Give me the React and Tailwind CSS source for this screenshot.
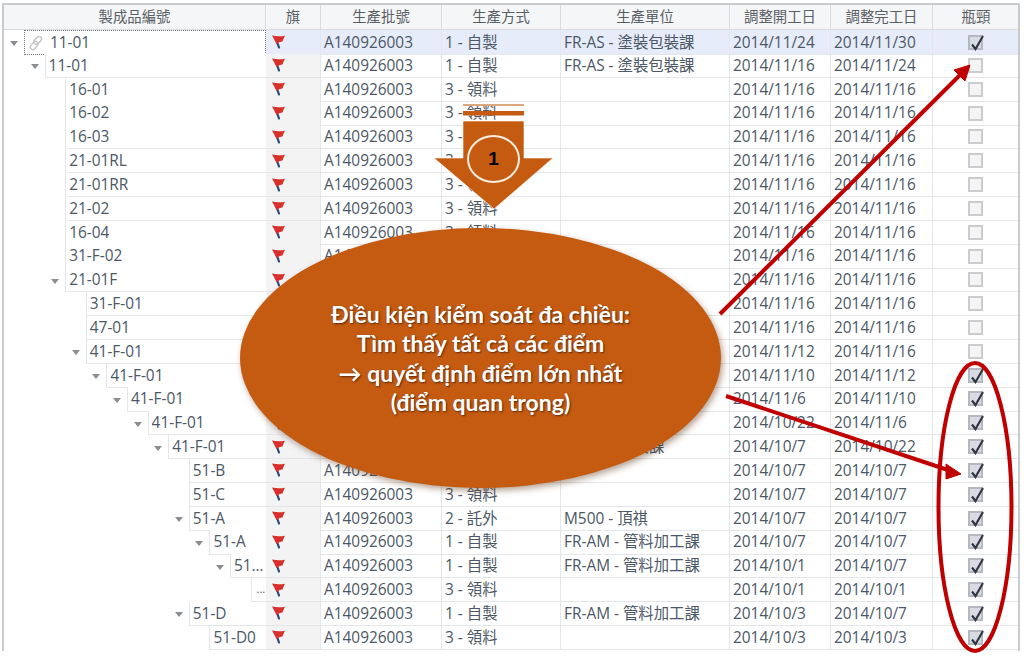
import React from 'react';

const SELF = '1 - 自製';
const PICK = '3 - 領料';
const COAT = 'FR-AS - 塗裝包裝課';
const PIPE = 'FR-AM - 管料加工課';
const WELD = 'FR-AP - 焊接課';

const rows = [
  { name: '11-01', level: 0, open: true, method: SELF, unit: COAT, start: '2014/11/24', end: '2014/11/30', check: true, selected: true },
  { name: '11-01', level: 1, open: true, method: SELF, unit: COAT, start: '2014/11/16', end: '2014/11/24' },
  { name: '16-01', level: 2, method: PICK, unit: '', start: '2014/11/16', end: '2014/11/16' },
  { name: '16-02', level: 2, method: PICK, unit: '', start: '2014/11/16', end: '2014/11/16' },
  { name: '16-03', level: 2, method: PICK, unit: '', start: '2014/11/16', end: '2014/11/16' },
  { name: '21-01RL', level: 2, method: PICK, unit: '', start: '2014/11/16', end: '2014/11/16' },
  { name: '21-01RR', level: 2, method: PICK, unit: '', start: '2014/11/16', end: '2014/11/16' },
  { name: '21-02', level: 2, method: PICK, unit: '', start: '2014/11/16', end: '2014/11/16' },
  { name: '16-04', level: 2, method: PICK, unit: '', start: '2014/11/16', end: '2014/11/16' },
  { name: '31-F-02', level: 2, method: PICK, unit: '', start: '2014/11/16', end: '2014/11/16' },
  { name: '21-01F', level: 2, open: true, method: SELF, unit: '', start: '2014/11/16', end: '2014/11/16' },
  { name: '31-F-01', level: 3, method: PICK, unit: '', start: '2014/11/16', end: '2014/11/16' },
  { name: '47-01', level: 3, method: PICK, unit: '', start: '2014/11/16', end: '2014/11/16' },
  { name: '41-F-01', level: 3, open: true, method: SELF, unit: '', start: '2014/11/12', end: '2014/11/16' },
  { name: '41-F-01', level: 4, open: true, method: SELF, unit: WELD, start: '2014/11/10', end: '2014/11/12', check: true },
  { name: '41-F-01', level: 5, open: true, method: SELF, unit: WELD, start: '2014/11/6', end: '2014/11/10', check: true },
  { name: '41-F-01', level: 6, open: true, method: SELF, unit: WELD, start: '2014/10/22', end: '2014/11/6', check: true },
  { name: '41-F-01', level: 7, open: true, method: SELF, unit: WELD, start: '2014/10/7', end: '2014/10/22', check: true },
  { name: '51-B', level: 8, method: PICK, unit: '', start: '2014/10/7', end: '2014/10/7', check: true },
  { name: '51-C', level: 8, method: PICK, unit: '', start: '2014/10/7', end: '2014/10/7', check: true },
  { name: '51-A', level: 8, open: true, method: '2 - 託外', unit: 'M500 - 頂祺', start: '2014/10/7', end: '2014/10/7', check: true },
  { name: '51-A', level: 9, open: true, method: SELF, unit: PIPE, start: '2014/10/7', end: '2014/10/7', check: true },
  { name: '51-A0', level: 10, open: true, method: SELF, unit: PIPE, start: '2014/10/1', end: '2014/10/7', check: true },
  { name: '...', level: 11, tiny: true, method: PICK, unit: '', start: '2014/10/1', end: '2014/10/1', check: true },
  { name: '51-D', level: 8, open: true, method: SELF, unit: PIPE, start: '2014/10/3', end: '2014/10/7', check: true },
  { name: '51-D0', level: 9, method: PICK, unit: '', start: '2014/10/3', end: '2014/10/3', check: true },
];

const headers = ['製成品編號', '旗', '生產批號', '生產方式', '生產單位', '調整開工日', '調整完工日', '瓶頸'];

const COLS = 'grid grid-cols-[262px_55px_121px_119px_169px_101px_102px_87px]';

const Flag = () => (
  <svg width="13" height="14" viewBox="0 0 13 14">
    <path d="M4 4 L7 12.5" stroke="#2c4a7e" strokeWidth="2.2" strokeLinecap="round" />
    <path d="M0 0.5 Q6 2 13 0.8 Q11.5 3.5 10.5 6.5 Q7.5 6.2 4.5 9 Q2 4 0 0.5 Z" fill="#d9302c" />
  </svg>
);

const Toggle = () => (
  <svg width="8" height="5" viewBox="0 0 8 5">
    <path d="M0 0 H8 L4 5 Z" fill="#8a8d91" />
  </svg>
);

const LinkIcon = () => (
  <svg width="16" height="16" viewBox="0 0 16 16" fill="none" stroke="#c4c6c8" strokeWidth="1.4">
    <rect x="7.2" y="0.9" width="5" height="9" rx="2.5" transform="rotate(42 9.7 5.4)" />
    <rect x="3.6" y="6" width="5" height="9" rx="2.5" transform="rotate(42 6.1 10.5)" />
  </svg>
);

const Checkbox = ({ checked }) => (
  <div className={`relative w-[15px] h-[15px] border-2 ${checked ? 'border-[#b4b8c0] bg-[#d8dbe2]' : 'border-[#cbcccf] bg-[#f4f4f5]'}`}>
    {checked && (
      <svg className="absolute left-[-2px] top-[-4px]" width="18" height="19" viewBox="0 0 18 19" fill="none">
        <path d="M4 11.5 L7.5 16 L15 3" stroke="#2f3640" strokeWidth="2.1" />
      </svg>
    )}
  </div>
);

const TreeCell = ({ row }) => (
  <div className="flex min-w-0 h-full">
    <div className="shrink-0 flex items-center justify-end pr-[6px] pt-[2px]" style={{ width: 20 + row.level * 20.6 }}>
      {row.open && <Toggle />}
    </div>
    <div
      className={`flex-1 min-w-0 flex items-center gap-[6px] pl-[3px] bg-white ${
        row.selected ? 'border border-dotted border-[#777]' : 'border-l border-b border-[#e4e6e9]'
      }`}
    >
      {row.selected && <LinkIcon />}
      <span className={`truncate ${row.tiny ? 'text-[11px] pl-[2px]' : ''}`}>{row.name}</span>
    </div>
  </div>
);

const Row = ({ row }) => {
  const line = `border-b border-r border-[#e4e6e9] flex items-center ${row.selected ? 'bg-[#e6ecfa]' : ''}`;
  return (
    <div className={`${COLS} h-[23.84px]`}>
      <TreeCell row={row} />
      <div className={`border-b border-r border-[#e4e6e9] flex items-center pl-[6px] ${row.selected ? 'bg-[#e6ecfa]' : 'bg-[#f3f3f4]'}`}>
        <Flag />
      </div>
      <div className={`${line} pl-[3px]`}>A140926003</div>
      <div className={`${line} pl-[3px]`}>{row.method}</div>
      <div className={`${line} pl-[3px]`}>{row.unit}</div>
      <div className={`${line} pl-[3px]`}>{row.start}</div>
      <div className={`${line} pl-[3px]`}>{row.end}</div>
      <div className={`${line} justify-center pr-[2px]`}>
        <Checkbox checked={row.check} />
      </div>
    </div>
  );
};

// arrow pointing at the grid, the stem has two white cuts near the top
const DownArrow = () => (
  <div className="absolute left-[434px] top-[104px] w-[120px] h-[106px]">
    <svg width="120" height="106" viewBox="0 0 120 106">
      <path d="M29 17 H90 V54 H119 L60 105 L0 54 H29 Z" fill="#c55a11" stroke="#ffffff" strokeWidth="0.6" />
      <rect x="29" y="0" width="61" height="2" fill="#dba77f" />
      <rect x="29" y="7" width="61" height="4.5" fill="#c55a11" />
    </svg>
    <div className="absolute left-[33px] top-[31px] w-[53px] h-[48px] rounded-[50%] border-2 border-[#fbeee2] flex items-center justify-center text-black font-bold text-[19px] font-['Liberation_Sans',sans-serif]">
      1
    </div>
  </div>
);

const RedMarks = () => (
  <svg className="absolute left-0 top-0" width="1024" height="656" viewBox="0 0 1024 656" fill="none">
    <path d="M720 314 L960 75" stroke="#c00000" strokeWidth="4" />
    <path d="M970 65 L954 70 L965 81 Z" fill="#c00000" stroke="#c00000" strokeWidth="1" />
    <path d="M726 396 L948 470" stroke="#c00000" strokeWidth="4" />
    <path d="M961 474 L946 464 L946 479 Z" fill="#c00000" stroke="#c00000" strokeWidth="1" />
    <ellipse cx="975" cy="507" rx="36.5" ry="144" stroke="#c00000" strokeWidth="4" />
  </svg>
);

export default function App() {
  return (
    <div className="relative w-[1024px] h-[656px] overflow-hidden bg-white pl-[2px] pt-[3px] font-['Open_Sans','Noto_Sans_CJK_TC',sans-serif] text-[15.4px] text-[#4c5866]">
      <div className="w-[1018px] h-[648px] overflow-hidden border-l-2 border-t-2 border-r-2 border-[#c9cbce]">
        <div className={`${COLS} h-[25px] bg-[#f5f6f7] border-b border-[#d9dbde] text-[14.4px] text-[#5a5f66]`}>
          {headers.map((h) => (
            <div key={h} className="flex items-center justify-center border-r border-[#d9dbde]">
              {h}
            </div>
          ))}
        </div>
        {rows.map((row, i) => (
          <Row key={i} row={row} />
        ))}
      </div>

      <DownArrow />
      <RedMarks />

      <div className="absolute left-[240px] top-[228px] w-[481px] h-[260px] rounded-[50%] bg-[#c55a11] shadow-[2px_3px_6px_rgba(90,50,20,0.45)] flex flex-col items-center justify-center text-white font-bold text-[23px] leading-[29.5px] pt-[1px] font-['Lato','Open_Sans',sans-serif] [text-shadow:1px_1px_2px_rgba(0,0,0,0.55)]">
        <div>Điều kiện kiểm soát đa chiều:</div>
        <div>Tìm thấy tất cả các điểm</div>
        <div>→ quyết định điểm lớn nhất</div>
        <div>(điểm quan trọng)</div>
      </div>
    </div>
  );
}
